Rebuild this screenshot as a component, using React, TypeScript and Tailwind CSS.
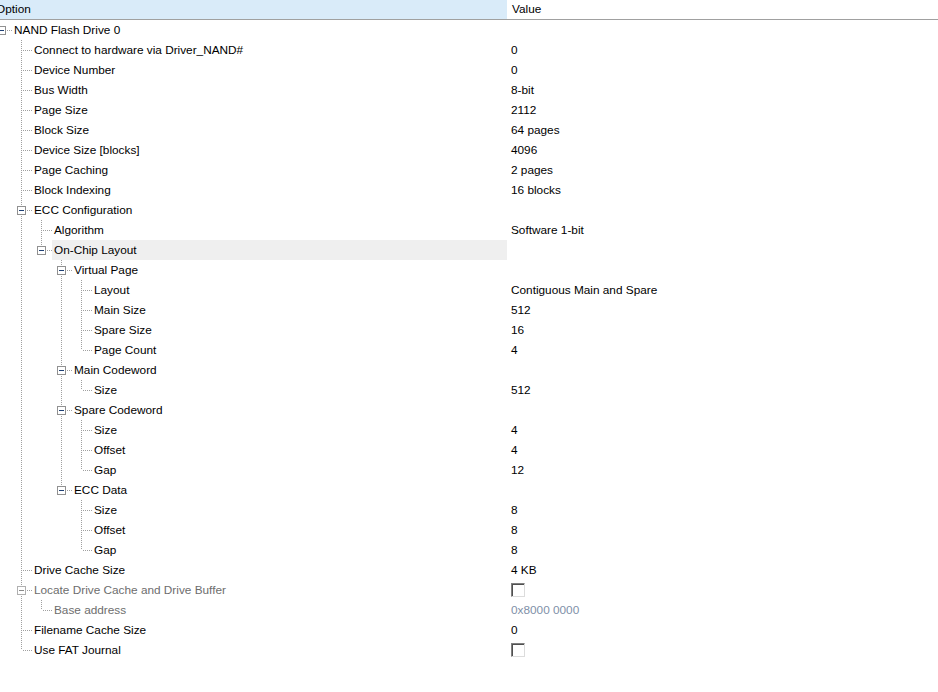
import type { ReactNode } from "react";

type Node = {
  label: string;
  value?: string;
  check?: boolean;
  disabled?: boolean;
  selected?: boolean;
  children?: Node[];
};

const tree: Node = {
  label: "NAND Flash Drive 0",
  children: [
    { label: "Connect to hardware via Driver_NAND#", value: "0" },
    { label: "Device Number", value: "0" },
    { label: "Bus Width", value: "8-bit" },
    { label: "Page Size", value: "2112" },
    { label: "Block Size", value: "64 pages" },
    { label: "Device Size [blocks]", value: "4096" },
    { label: "Page Caching", value: "2 pages" },
    { label: "Block Indexing", value: "16 blocks" },
    {
      label: "ECC Configuration",
      children: [
        { label: "Algorithm", value: "Software 1-bit" },
        {
          label: "On-Chip Layout",
          selected: true,
          children: [
            {
              label: "Virtual Page",
              children: [
                { label: "Layout", value: "Contiguous Main and Spare" },
                { label: "Main Size", value: "512" },
                { label: "Spare Size", value: "16" },
                { label: "Page Count", value: "4" },
              ],
            },
            { label: "Main Codeword", children: [{ label: "Size", value: "512" }] },
            {
              label: "Spare Codeword",
              children: [
                { label: "Size", value: "4" },
                { label: "Offset", value: "4" },
                { label: "Gap", value: "12" },
              ],
            },
            {
              label: "ECC Data",
              children: [
                { label: "Size", value: "8" },
                { label: "Offset", value: "8" },
                { label: "Gap", value: "8" },
              ],
            },
          ],
        },
      ],
    },
    { label: "Drive Cache Size", value: "4 KB" },
    {
      label: "Locate Drive Cache and Drive Buffer",
      check: true,
      disabled: true,
      children: [{ label: "Base address", value: "0x8000 0000", disabled: true }],
    },
    { label: "Filename Cache Size", value: "0" },
    { label: "Use FAT Journal", check: true },
  ],
};

type Row = { node: Node; level: number; last: boolean; rails: boolean[] };

function flatten(n: Node, level: number, last: boolean, rails: boolean[], out: Row[]) {
  out.push({ node: n, level, last, rails });
  const kids = n.children ?? [];
  kids.forEach((k, i) => {
    const isLast = i === kids.length - 1;
    flatten(k, level + 1, isLast, level > 0 ? [...rails, !last] : [...rails], out);
  });
  return out;
}

const rows = flatten(tree, 0, true, [], []);

/** dotted guide lines + expander box */
function Guides({ row }: { row: Row }) {
  const { level, last, rails, node } = row;
  const w = level * 20 + 14;
  const cx = level * 20 + 1 + 0.5;
  const dot = "#a0a0a0";
  const lines: ReactNode[] = [];
  rails.forEach((on, i) => {
    if (!on) return;
    const x = (i + 1) * 20 + 1 + 0.5;
    lines.push(<line key={"r" + i} x1={x} y1={0} x2={x} y2={20} stroke={dot} strokeDasharray="1 1" />);
  });
  if (level > 0) {
    lines.push(<line key="v" x1={cx} y1={0} x2={cx} y2={last ? 10 : 20} stroke={dot} strokeDasharray="1 1" />);
  }
  lines.push(<line key="h" x1={cx + 1} y1={10.5} x2={level * 20 + 13} y2={10.5} stroke={dot} strokeDasharray="1 1" />);
  const box = node.children ? (
    <g key="b">
      <rect x={level * 20 - 3 + 0.5} y={6.5} width={8} height={8} fill="#fff" stroke={node.disabled ? "#b0b0b0" : "#919191"} />
      <line x1={level * 20 - 1} y1={10.5} x2={level * 20 + 4} y2={10.5} stroke={node.disabled ? "#8a8a8a" : "#1e3f73"} />
    </g>
  ) : null;
  return (
    <svg width={w} height={20} className="shrink-0" shapeRendering="crispEdges">
      {lines}
      {box}
    </svg>
  );
}

function Check() {
  return (
    <span className="block h-[14px] w-[14px] border border-t-[#808080] border-l-[#808080] border-b-[#dcdcdc] border-r-[#dcdcdc] bg-white">
      <span className="block h-full w-full border-t border-l border-t-[#505050] border-l-[#505050]" />
    </span>
  );
}

export default function App() {
  return (
    <div
      className="h-[692px] w-[938px] overflow-hidden bg-white text-[11.8px] text-black"
      style={{ fontFamily: '"Segoe UI", "Liberation Sans", Arial, sans-serif' }}
    >
      <div className="flex h-[20px] border-b border-[#a0a0a0] leading-[19px]">
        <div className="w-[507px] shrink-0 overflow-hidden bg-[#d9ebf9]">
          <span className="ml-[-4px]">Option</span>
        </div>
        <div className="pl-[5px]">Value</div>
      </div>
      {rows.map((r, i) => (
        <div key={i} className="flex h-[20px] leading-[20px]">
          <div className="flex w-[507px] shrink-0 overflow-hidden">
            <Guides row={r} />
            <div
              className={`-ml-[2px] flex-1 pl-[2px] ${r.node.selected ? "bg-[#efefef]" : ""} ${
                r.node.disabled ? "text-[#6d6d6d]" : ""
              }`}
            >
              {r.node.label}
            </div>
          </div>
          <div className={`flex items-center pl-[4px] ${r.node.disabled ? "text-[#8090a8]" : ""}`}>
            {r.node.check ? <Check /> : r.node.value}
          </div>
        </div>
      ))}
    </div>
  );
}
